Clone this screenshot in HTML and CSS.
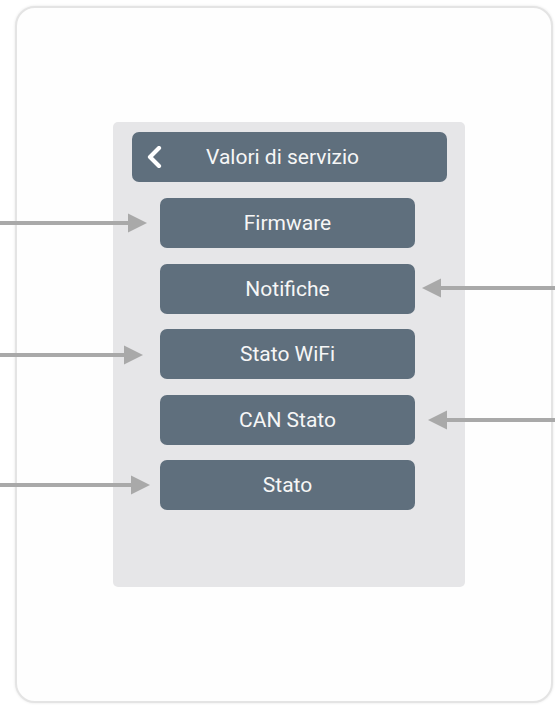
FILE: index.html
```html
<!DOCTYPE html>
<html lang="it">
<head>
<meta charset="utf-8">
<title>Valori di servizio</title>
<link rel="stylesheet" href="styles.css">
</head>
<body>
<div class="card">
  <div class="panel">
    <div class="header">
      <svg class="chev" width="16" height="22" viewBox="0 0 16 22"><path d="M13 2 L4 11 L13 20" fill="none" stroke="#ffffff" stroke-width="4.2" stroke-linecap="round" stroke-linejoin="round"/></svg>
      <span class="title">Valori di servizio</span>
    </div>
    <div class="list">
      <div class="btn">Firmware</div>
      <div class="btn">Notifiche</div>
      <div class="btn">Stato WiFi</div>
      <div class="btn">CAN Stato</div>
      <div class="btn">Stato</div>
    </div>
  </div>
</div>
<svg class="arrows" width="555" height="705" viewBox="0 0 555 705">
  <g fill="#a9a9a9" stroke="none">
    <rect x="0" y="221" width="130" height="4"/>
    <polygon points="147,223 128,213.5 128,232.5"/>
    <rect x="0" y="353" width="126" height="4"/>
    <polygon points="143,355 124,345.5 124,364.5"/>
    <rect x="0" y="483" width="133" height="4"/>
    <polygon points="150,485 131,475.5 131,494.5"/>
    <rect x="440" y="286" width="115" height="4"/>
    <polygon points="422,288 441,278.5 441,297.5"/>
    <rect x="446" y="418" width="109" height="4"/>
    <polygon points="428,420 447,410.5 447,429.5"/>
  </g>
</svg>
</body>
</html>
```

FILE: styles.css
```css
html, body {
  margin: 0;
  padding: 0;
  background: #ffffff;
}
body {
  position: relative;
  width: 555px;
  height: 705px;
  overflow: hidden;
  font-family: Roboto, "Liberation Sans", sans-serif;
}
.card {
  box-sizing: border-box;
  margin: 6px 0 0 15px;
  width: 538px;
  height: 697px;
  border: 2px solid #e4e4e4;
  border-radius: 20px;
  background: #fefefe;
  box-shadow: 0 0 3px rgba(0,0,0,0.1);
  padding: 114px 0 0 96px;
}
.panel {
  box-sizing: border-box;
  width: 352px;
  height: 465px;
  background: #e6e6e8;
  border-radius: 5px;
  padding: 10px 18px 0 19px;
  display: flex;
  flex-direction: column;
}
.header {
  height: 50px;
  background: #5f6f7d;
  border-radius: 7px;
  display: flex;
  align-items: center;
  padding-left: 14px;
  margin-bottom: 16px;
}
.chev {
  display: block;
}
.title {
  margin-left: 44px;
  color: #f6f6f6;
  font-size: 21px;
}
.list {
  display: flex;
  flex-direction: column;
  gap: 15.5px;
  padding-left: 28px;
}
.btn {
  width: 255px;
  height: 50px;
  background: #5f6f7d;
  border-radius: 7px;
  color: #f6f6f6;
  font-size: 21px;
  display: flex;
  align-items: center;
  justify-content: center;
}
.arrows {
  position: absolute;
  left: 0;
  top: 0;
  pointer-events: none;
}
```
